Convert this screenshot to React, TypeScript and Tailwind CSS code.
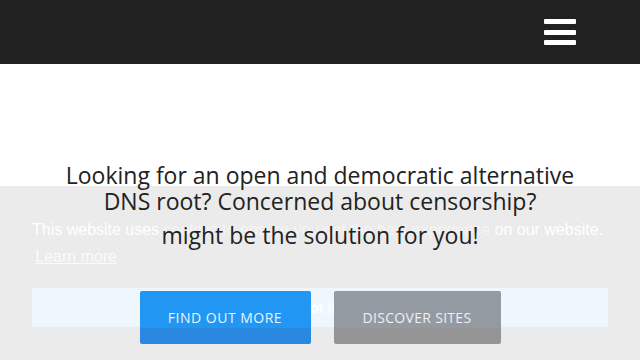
export default function App() {
  return (
    <div className="relative h-[360px] w-[640px] overflow-hidden bg-white font-['Open_Sans',sans-serif]">
      <header className="flex h-16 items-center justify-end bg-[#212121] pr-16">
        <button className="flex w-8 flex-col gap-[5.5px]" aria-label="Menu">
          <span className="block h-[5px] w-8 rounded-[1px] bg-white" />
          <span className="block h-[5px] w-8 rounded-[1px] bg-white" />
          <span className="block h-[5px] w-8 rounded-[1px] bg-white" />
        </button>
      </header>

      <main className="relative z-20 flex flex-col items-center pt-[98px] text-center">
        <h2 className="text-[23px] font-normal leading-[26px] text-[#222]">
          <span className="block whitespace-nowrap">
            Looking for an open and democratic alternative
          </span>
          <span className="block whitespace-nowrap">
            DNS root? Concerned about censorship?
          </span>
          <span className="mt-[8px] block">
            <span className="mr-[-12px] bg-[#ebebeb]/55 pr-[12px]">
              might be the solution for you!
            </span>
          </span>
        </h2>

        <div className="mt-[43px] flex gap-[23px]">
          <a className="flex h-[53px] w-[171px] items-center justify-center rounded-[2px] bg-[linear-gradient(#2196f3_0,#2196f3_37px,#2a88e0_37px)] text-[14px] tracking-[0.5px] text-white/90">
            FIND OUT MORE
          </a>
          <a className="flex h-[53px] w-[167px] items-center justify-center rounded-[2px] bg-[linear-gradient(#939aa2_0,#939aa2_37px,#959595_37px)] text-[14px] tracking-[0.3px] text-white/85">
            DISCOVER SITES
          </a>
        </div>
      </main>

      <div className="absolute inset-x-0 bottom-0 z-10 flex h-[174px] flex-col bg-[#ebebeb] p-8 font-['Liberation_Sans',Arial,sans-serif] text-[16px] leading-6 text-white">
        <span className="mb-4">
          This website uses cookies to ensure you get the best experience on our website.{" "}
          <a className="inline-block p-[0.2em] underline opacity-80">Learn more</a>
        </span>
        <a className="flex h-[39px] items-center justify-center bg-[#eef6fe] text-[14.4px] font-bold">
          Got it!
        </a>
      </div>
    </div>
  );
}
